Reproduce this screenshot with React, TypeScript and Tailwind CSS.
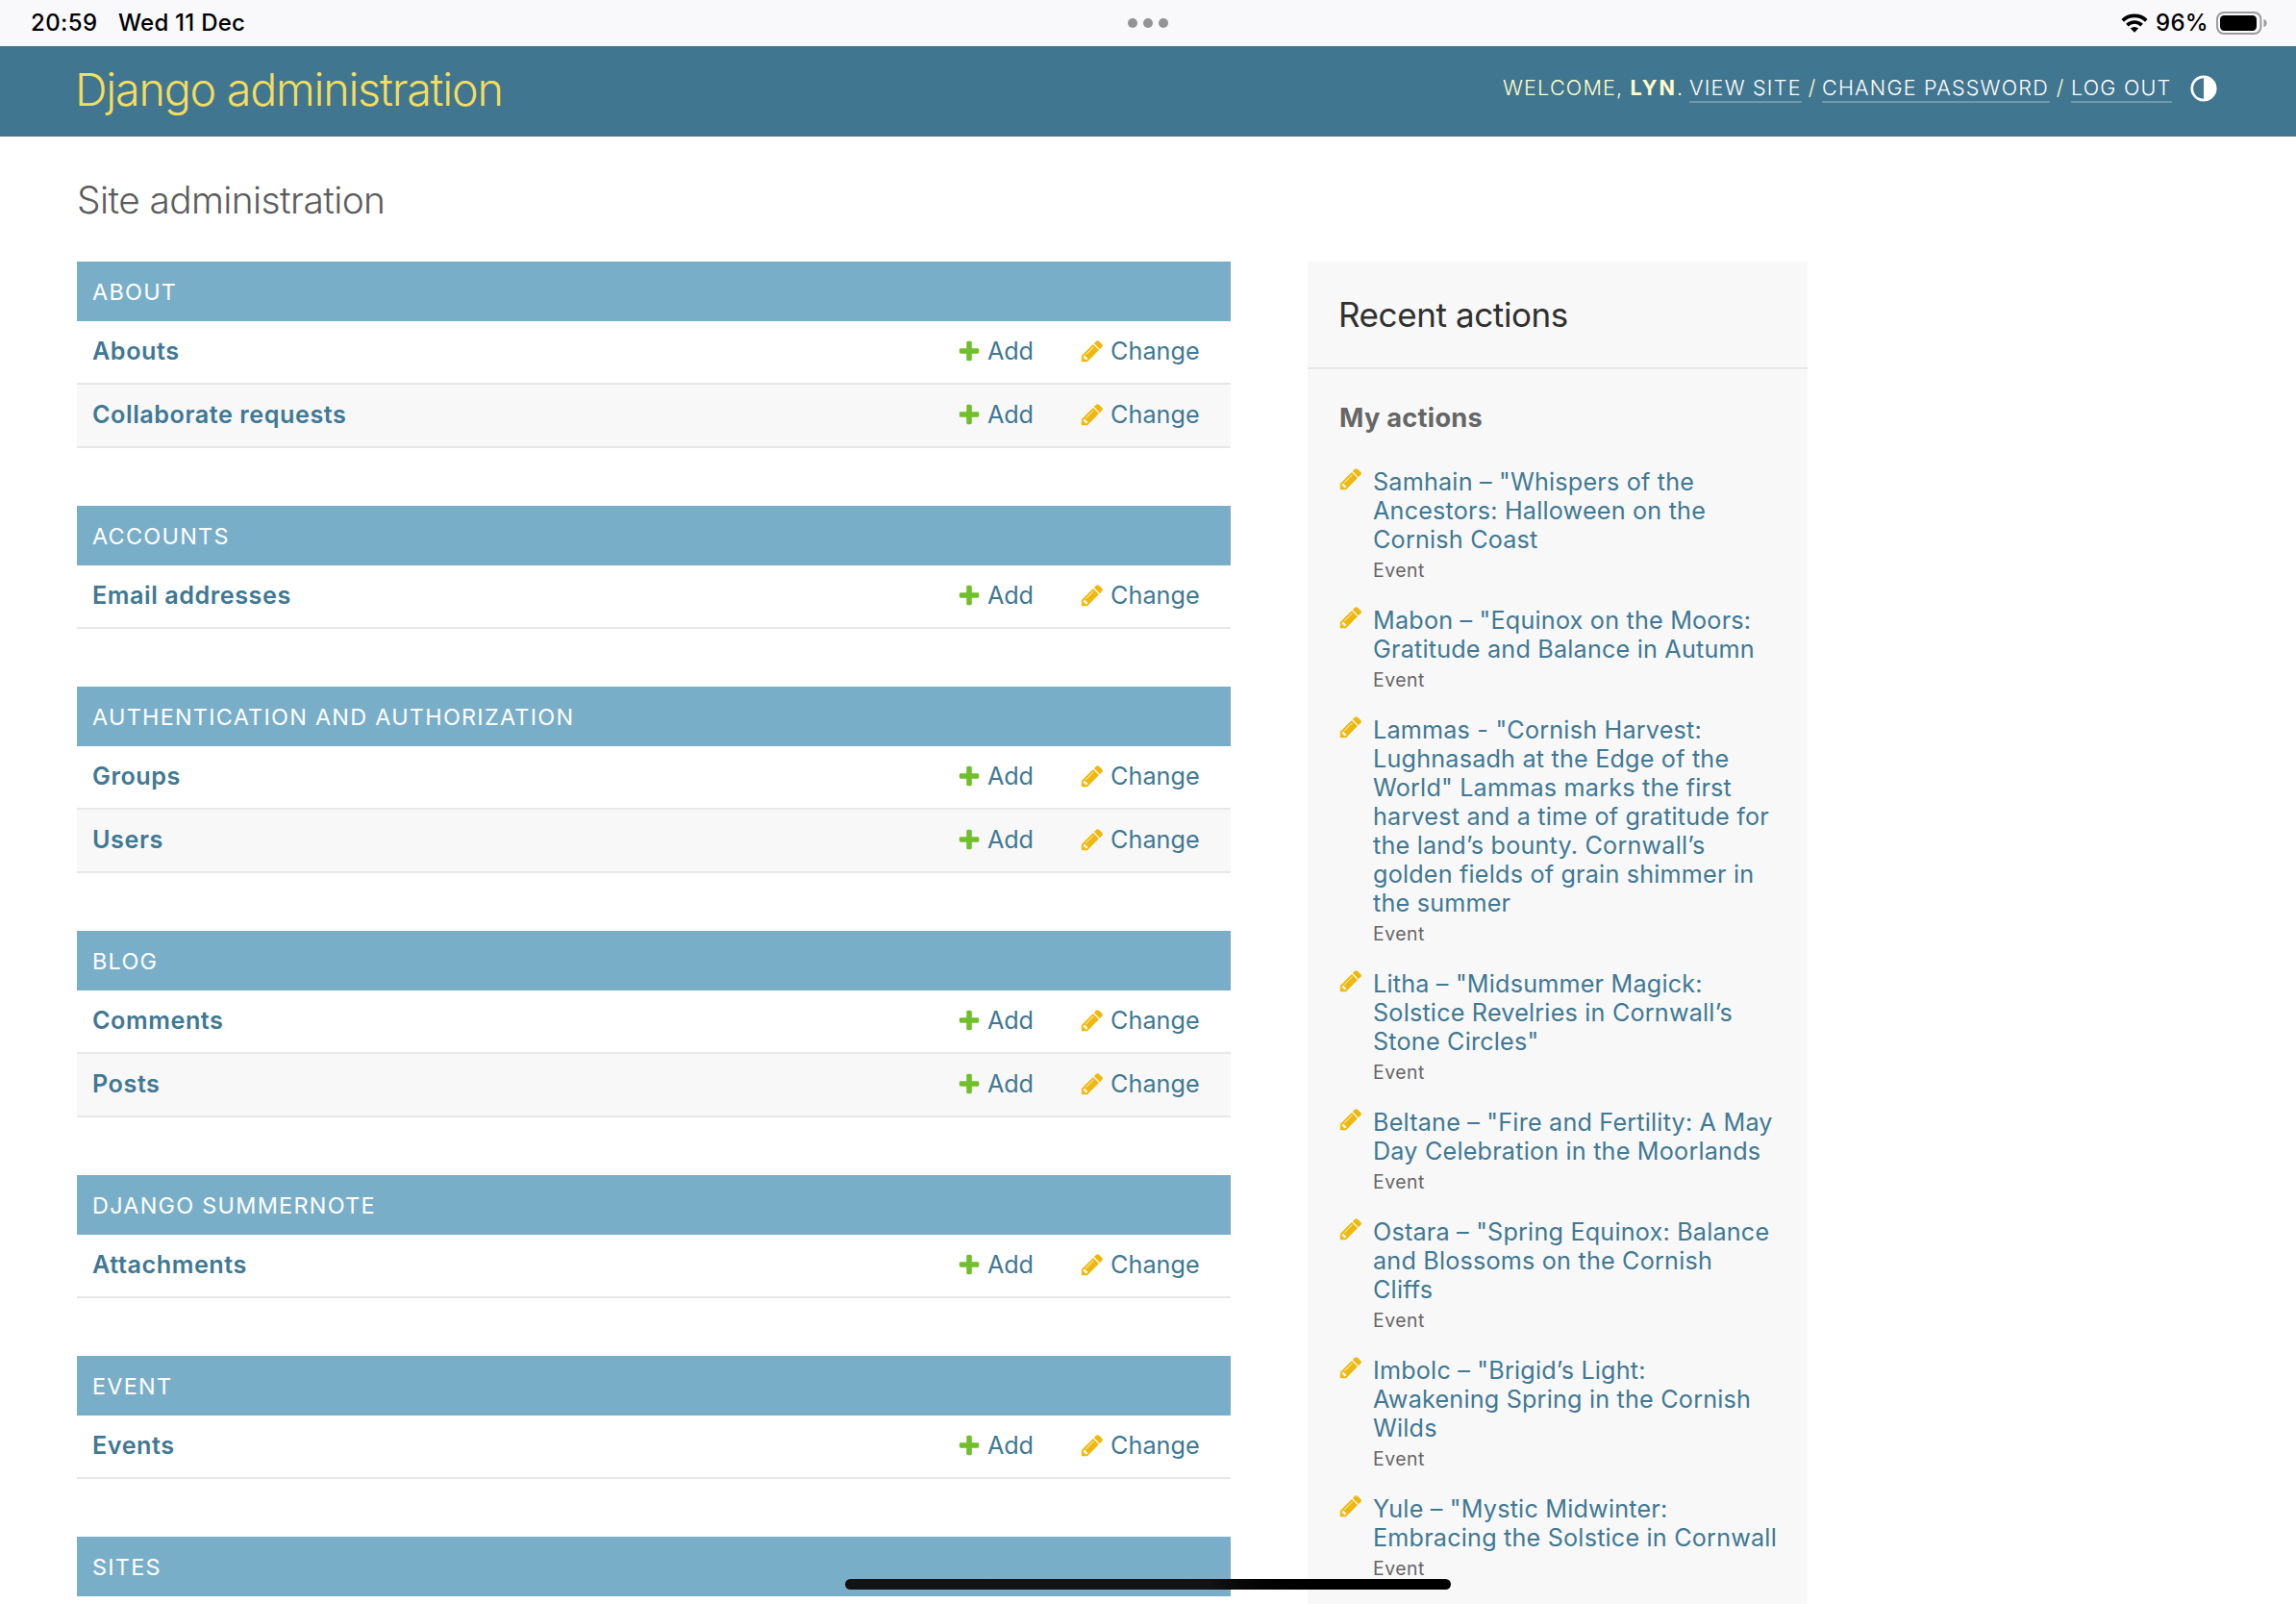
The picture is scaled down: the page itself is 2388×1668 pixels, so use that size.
const modules: { title: string; rows: string[] }[] = [
  { title: "ABOUT", rows: ["Abouts", "Collaborate requests"] },
  { title: "ACCOUNTS", rows: ["Email addresses"] },
  { title: "AUTHENTICATION AND AUTHORIZATION", rows: ["Groups", "Users"] },
  { title: "BLOG", rows: ["Comments", "Posts"] },
  { title: "DJANGO SUMMERNOTE", rows: ["Attachments"] },
  { title: "EVENT", rows: ["Events"] },
  { title: "SITES", rows: [] },
];

const actions: string[][] = [
  ['Samhain – "Whispers of the', "Ancestors: Halloween on the", "Cornish Coast"],
  ['Mabon – "Equinox on the Moors:', "Gratitude and Balance in Autumn"],
  [
    'Lammas - "Cornish Harvest:',
    "Lughnasadh at the Edge of the",
    'World" Lammas marks the first',
    "harvest and a time of gratitude for",
    "the land’s bounty. Cornwall’s",
    "golden fields of grain shimmer in",
    "the summer",
  ],
  ['Litha – "Midsummer Magick:', "Solstice Revelries in Cornwall’s", 'Stone Circles"'],
  ['Beltane – "Fire and Fertility: A May', "Day Celebration in the Moorlands"],
  ['Ostara – "Spring Equinox: Balance', "and Blossoms on the Cornish", "Cliffs"],
  ['Imbolc – "Brigid’s Light:', "Awakening Spring in the Cornish", "Wilds"],
  ['Yule – "Mystic Midwinter:', "Embracing the Solstice in Cornwall"],
];

function PlusIcon() {
  return (
    <svg className="size-[26px] shrink-0" viewBox="0 0 1792 1792" fill="#70bf2b">
      <path d="M1600 796v192q0 40-28 68t-68 28h-416v416q0 40-28 68t-68 28h-192q-40 0-68-28t-28-68v-416h-416q-40 0-68-28t-28-68v-192q0-40 28-68t68-28h416v-416q0-40 28-68t68-28h192q40 0 68 28t28 68v416h416q40 0 68 28t28 68z" />
    </svg>
  );
}

function PencilIcon() {
  return (
    <svg className="size-[26px] shrink-0" viewBox="0 0 1792 1792" fill="#efb80b">
      <path d="M491 1536l91-91-235-235-91 91v107h128v128h107zm523-928q0-22-22-22-10 0-17 7l-542 542q-7 7-7 17 0 22 22 22 10 0 17-7l542-542q7-7 7-17zm-54-192l416 416-832 832h-416v-416zm683 96q0 53-37 90l-166 166-416-416 166-165q36-38 90-38 53 0 91 38l235 234q37 39 37 91z" />
    </svg>
  );
}

function WifiIcon() {
  return (
    <svg className="h-5 w-7" viewBox="0 0 28 20">
      <path d="M1.7 7.3A17.7 17.7 0 0 1 26.3 7.3" fill="none" stroke="#000" strokeWidth="3.7" />
      <path d="M6.4 12.1A10.9 10.9 0 0 1 21.6 12.1" fill="none" stroke="#000" strokeWidth="3.7" />
      <path d="M14 19.8L9.8 15.6A6 6 0 0 1 18.2 15.6Z" fill="#000" />
    </svg>
  );
}

function BatteryIcon() {
  return (
    <svg className="h-6 w-[53px]" viewBox="0 0 53 24">
      <rect x="1" y="1" width="45.4" height="22" rx="7" fill="none" stroke="#9b9b9d" strokeWidth="2" />
      <rect x="4" y="4" width="38" height="16" rx="4.2" fill="#000" />
      <path d="M49.5 7.7C51.3 8.4 52.6 10 52.6 12C52.6 14 51.3 15.6 49.5 16.3Z" fill="#9b9b9d" />
    </svg>
  );
}

function StatusBar() {
  return (
    <div className="relative flex h-12 items-center bg-[#f9f9fb] pl-8 pr-[30px] text-[24px] font-medium leading-[46px] text-black">
      <span className="w-[91px] tracking-[0.4px]">20:59</span>
      <span className="tracking-[0.23px]">Wed 11 Dec</span>
      <div className="absolute left-[1173px] top-[19px] flex gap-1.5">
        <span className="size-2.5 rounded-full bg-[#949496]" />
        <span className="size-2.5 rounded-full bg-[#949496]" />
        <span className="size-2.5 rounded-full bg-[#949496]" />
      </div>
      <div className="ml-auto flex items-center">
        <WifiIcon />
        <span className="ml-2 w-[63px] tracking-[0.3px]">96%</span>
        <BatteryIcon />
      </div>
    </div>
  );
}

function Header() {
  return (
    <header className="flex h-[94px] items-start justify-between bg-[#417690] pl-[78px] pr-[82px]">
      <h1 className="text-[46.6px] font-light leading-[90px] tracking-[-1.2px] text-[#f5dd5d]">
        Django administration
      </h1>
      <div className="flex pt-[29px] text-[21.6px] font-light leading-7 tracking-[1.2px] text-[#ffffcc]">
        <div className="w-[194px] whitespace-nowrap">
          WELCOME,<strong className="ml-[7px] font-bold tracking-[2px]">LYN</strong>.
        </div>
        <a className="w-[117px] whitespace-nowrap border-b-2 border-white/25 text-white">VIEW SITE</a>
        <span className="w-[21px] pl-px text-center">/</span>
        <a className="w-[237px] whitespace-nowrap border-b-2 border-white/25 text-white">CHANGE PASSWORD</a>
        <span className="w-[22px] text-center">/</span>
        <a className="w-[105px] whitespace-nowrap border-b-2 border-white/25 tracking-[1.2px] text-white">LOG OUT</a>
        <svg className="ml-[19px] mt-px size-7" viewBox="0 0 28 28">
          <circle cx="14" cy="14" r="12.2" fill="none" stroke="#fff" strokeWidth="2.7" />
          <path d="M14 1.5A12.5 12.5 0 0 1 14 26.5Z" fill="#fff" />
        </svg>
      </div>
    </header>
  );
}

function Module({ title, rows }: { title: string; rows: string[] }) {
  return (
    <section className="mb-[60px]">
      <h2 className="h-[62px] bg-[#79aec8] pl-4 text-[23.4px] font-normal leading-[63px] tracking-[1.27px] text-white">
        {title}
      </h2>
      {rows.map((row) => (
        <div
          key={row}
          className="flex h-[66px] items-center border-b-2 border-[#e8e8e8] pb-[3px] pl-4 text-[25.2px] leading-[60px] text-[#417893] even:bg-white odd:bg-[#f8f8f8]"
        >
          <span className="grow font-semibold tracking-[0.55px]">{row}</span>
          <a className="flex w-32 items-center">
            <PlusIcon />
            <span className="ml-[6px] tracking-[-0.2px]">Add</span>
          </a>
          <a className="flex w-[157px] items-center">
            <PencilIcon />
            <span className="ml-[6px] tracking-[0.05px]">Change</span>
          </a>
        </div>
      ))}
    </section>
  );
}

function Sidebar() {
  return (
    <aside className="h-[1396px] w-[520px] overflow-hidden bg-[#f8f8f8]">
      <h2 className="h-28 border-b-2 border-[#e8e8e8] pl-8 text-[35px] font-normal leading-[111px] tracking-[-0.4px] text-[#303030]">
        Recent actions
      </h2>
      <h3 className="h-[102px] pl-[33px] text-[27.2px] font-bold leading-[101px] tracking-[0.27px] text-[#666]">
        My actions
      </h3>
      <ul className="pl-8">
        {actions.map((lines) => (
          <li key={lines[0]} className="mb-5 flex">
            <div className="w-9 -translate-y-px">
              <PencilIcon />
            </div>
            <div>
              {lines.map((line) => (
                <p key={line} className="whitespace-nowrap text-[25.2px] leading-[30px] tracking-[0.19px] text-[#417893]">
                  {line}
                </p>
              ))}
              <p className="text-[19.4px] leading-[34px] tracking-[0.5px] text-[#666]">Event</p>
            </div>
          </li>
        ))}
      </ul>
    </aside>
  );
}

export default function App() {
  return (
    <div className="relative h-[1668px] w-[2388px] overflow-hidden bg-white font-['Inter',sans-serif]">
      <StatusBar />
      <Header />
      <h1 className="h-[130px] pl-20 text-[38.8px] font-light leading-[131px] tracking-[-0.56px] text-[#5c5c5c]">
        Site administration
      </h1>
      <main className="flex gap-20 pl-20">
        <div className="h-[1396px] w-[1200px] overflow-hidden">
          {modules.map((m) => (
            <Module key={m.title} {...m} />
          ))}
        </div>
        <Sidebar />
      </main>
      <div className="absolute left-[879px] top-[1642px] h-[11px] w-[630px] rounded-full bg-linear-to-r from-[#131313] from-60% to-black to-80%" />
    </div>
  );
}
